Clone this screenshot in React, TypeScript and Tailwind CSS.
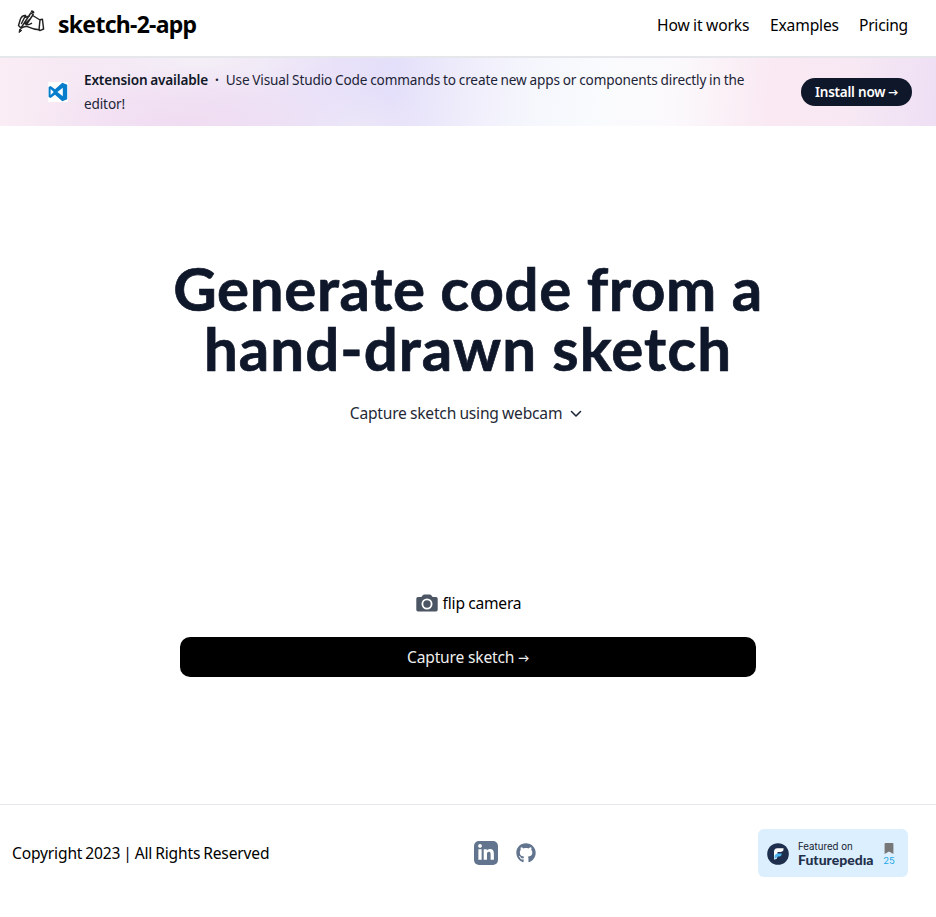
import type { ReactNode } from "react";
import { FaLinkedinIn, FaGithub } from "react-icons/fa";

function Arrow({ className }: { className: string }) {
  return <span className={className}>→</span>;
}

function WritingHand() {
  return (
    <svg viewBox="0 0 30 28" className="h-7 w-[30px]" fill="none" stroke="#222" strokeWidth="1.45" strokeLinecap="round" strokeLinejoin="round">
      <path d="M9.5 6.5 C6.5 6.3 5.2 8 4.3 10.5 L2.5 16.5 L5 19 L7.5 18 L10.5 17.3 C14 18.8 17.5 20.5 23 20.8" />
      <path d="M17.5 7 L24 11 L23 20.8 M24 10.8 L26.4 10.2 L27.6 20 L23.8 21.6 L23 20.8" />
      <path d="M5 19 L14.8 4 L17.2 5.5 L10.5 15.5 M9.5 6.5 L5.5 14.5 M13.5 7 L8.5 8.5 M14 10 L9.2 14.7 C10.5 16 13.5 15.5 15.5 14.3" />
      <path d="M16 2.5 L17.2 3.3" strokeWidth="2.4" />
      <path d="M3.7 20.4 L3 23.5 L5.5 21.7 Z" fill="#222" strokeWidth="1" />
    </svg>
  );
}

function VSCodeLogo() {
  return (
    <span className="flex size-5 shrink-0 bg-white">
      <svg viewBox="0 0 20 20" className="size-5">
        <path d="M14.3 0.7 L19.2 2.7 V17.3 L14.3 19.3 L7 12.7 L2.6 16 L0.6 15 V5 L2.6 4 L7 7.3 Z M14.8 5.8 L9.4 10 L14.8 14.2 Z M2.6 7.1 V12.9 L5.7 10 Z" fill="#087dcc" fillRule="evenodd" />
      </svg>
    </span>
  );
}

function NavLink({ children, className }: { children: ReactNode; className: string }) {
  return <a className={className}>{children}</a>;
}

function CameraIcon() {
  return (
    <svg viewBox="0 0 22 18" className="h-[18px] w-[22px]">
      <path d="M2 3 H5.3 L6.8 1.2 Q7.3 .5 8.3 .5 H13.7 Q14.7 .5 15.2 1.2 L16.7 3 H20 Q21.7 3 21.7 4.8 V15.7 Q21.7 17.5 20 17.5 H2 Q.3 17.5 .3 15.7 V4.8 Q.3 3 2 3 Z" fill="#4b5563" />
      <circle cx="11" cy="10" r="4.6" fill="#4b5563" stroke="#fff" strokeWidth="1.8" />
    </svg>
  );
}

function FuturepediaBadge() {
  return (
    <div className="flex h-12 w-[150px] items-center rounded-md bg-[#dceffe] pl-[9px] pt-0.5">
      <svg viewBox="0 0 22 22" className="size-[22px] shrink-0">
        <circle cx="11" cy="11" r="10.8" fill="#1e2e4d" />
        <path d="M7 16.5 V9 Q7 5.2 10.3 5.2 H16.5 V6.5 Q16.5 8.9 13 8.9 H10.5 V13 Q10.5 16.5 7 16.5 Z" fill="#fff" />
        <path d="M7.5 14 Q7.5 10.4 11 10.4 H14.8 Q14.5 13.6 11.5 13.6 H10.4 Q9.7 15.5 7.5 15.7 Z" fill="#4fb6f2" />
      </svg>
      <div className="ml-[9px] flex w-[77px] flex-col">
        <span className="whitespace-nowrap font-['Inter'] text-[9.7px] leading-[11px] text-[#17222f]">Featured on</span>
        <span className="whitespace-nowrap font-['Lato'] text-[14px] font-black leading-[15px] text-[#22304b]">Futurepedıa</span>
      </div>
      <div className="ml-1.5 flex w-4 flex-col items-center">
        <svg viewBox="0 0 10 11" className="mt-0.5 h-[11px] w-[10px]"><path d="M1.4 0 H8.6 Q9.4 0 9.4 .8 V11 L5 8.6 L.6 11 V.8 Q.6 0 1.4 0 Z" fill="#777" /></svg>
        <span className="font-['Inter'] text-[9.5px] leading-[13px] text-[#22a7e8]">25</span>
      </div>
    </div>
  );
}

export default function App() {
  return (
    <div className="flex h-[917px] w-full flex-col bg-white font-['Noto_Sans',sans-serif] text-[15.6px] tracking-[-0.28px] text-black [word-spacing:-0.5px]">
      <header className="flex h-[58px] shrink-0 items-start justify-between border-b-2 border-gray-200 pl-4 pr-7">
        <div className="flex items-start">
          <div className="mt-[9px]"><WritingHand /></div>
          <span className="ml-3 mt-2.5 text-[23px] font-bold leading-[28px] tracking-[-0.72px]">sketch-2-app</span>
        </div>
        <nav className="flex gap-5 pt-[13px] leading-6">
          <NavLink className="w-[93px] whitespace-nowrap tracking-[-0.1px]">How it works</NavLink>
          <NavLink className="w-[69px] tracking-[-0.15px]">Examples</NavLink>
          <NavLink className="w-[49px] tracking-[-0.25px]">Pricing</NavLink>
        </nav>
      </header>

      <section className="flex h-[68px] shrink-0 items-center bg-[radial-gradient(ellipse_160px_60px_at_20%_100%,#f0dcf2_0%,transparent_100%),radial-gradient(ellipse_140px_45px_at_21%_0%,#f4eff7_0%,transparent_100%),radial-gradient(ellipse_90px_35px_at_38%_100%,#ece6f8_0%,transparent_100%),linear-gradient(95deg,#faedf4_0%,#f3e4f4_16%,#ede4f7_28%,#e4dffa_42%,#eeecfb_49%,#f6f7fd_57%,#fafbfd_65%,#fbf9fc_72%,#fae9f2_82%,#f7e8f4_91%,#eedff5_100%)] pl-12 pr-6">
        <VSCodeLogo />
        <p className="ml-4 w-[676px] text-[13.6px] leading-6 tracking-[-0.14px] text-[#1c2436]">
          <strong className="font-semibold tracking-[-0.17px] text-[#111827]">Extension available</strong>
          <span className="mx-[7px] font-bold">·</span>
          Use Visual Studio Code commands to create new apps or components directly in the editor!
        </p>
        <button className="ml-auto flex h-7 w-[111px] items-center justify-center whitespace-nowrap rounded-full bg-[#0f172a] pt-px text-[13.5px] font-semibold tracking-[-0.22px] text-white">
          Install now <Arrow className="ml-[3px] font-['Lato'] text-[10px] font-black" />
        </button>
      </section>

      <main className="flex grow flex-col items-center pt-[132px]">
        <h1 className="text-center font-['Lato'] text-[60px] font-bold leading-[60px] text-[#0f172a] [-webkit-text-stroke:0.7px_currentColor]">
          <span className="block tracking-[0.65px]">Generate code from a</span>
          <span className="block tracking-[1.05px]">hand-drawn sketch</span>
        </h1>
        <div className="mt-[23px] flex items-center text-[#1f2937]">
          <span className="leading-6 tracking-[-0.21px]">Capture sketch using webcam</span>
          <svg viewBox="0 0 12 8" className="ml-2 mr-1 mt-px h-2 w-3" fill="none" stroke="currentColor" strokeWidth="1.6" strokeLinecap="round" strokeLinejoin="round"><path d="M1.5 1.5 L6 6 L10.5 1.5" /></svg>
        </div>
        <div className="mt-[166px] flex items-center gap-[5px] pl-px">
          <CameraIcon />
          <span className="leading-6 tracking-[-0.2px]">flip camera</span>
        </div>
        <button className="mt-[22px] flex h-10 w-[576px] items-center justify-center rounded-[10px] bg-black pt-0.5 text-[#eee]">
          <span className="tracking-[-0.18px]">Capture sketch</span><Arrow className="ml-1 font-['Lato'] text-[11px] font-bold" />
        </button>
      </main>

      <footer className="grid h-[113px] shrink-0 grid-cols-3 items-start border-t border-gray-200 pl-3 pr-7 pt-6">
        <p className="flex h-12 items-center whitespace-nowrap pt-0.5 tracking-[-0.17px] [word-spacing:-0.9px]">Copyright 2023 | All Rights Reserved</p>
        <div className="flex h-12 items-center gap-[18px] pl-[163px]">
          <span className="flex size-6 shrink-0 items-center justify-center rounded-[5px] bg-slate-500"><FaLinkedinIn className="size-[18px] text-white" /></span>
          <FaGithub className="size-5 shrink-0 text-slate-500" />
        </div>
        <div className="flex justify-end tracking-normal [word-spacing:0px]"><FuturepediaBadge /></div>
      </footer>
    </div>
  );
}
